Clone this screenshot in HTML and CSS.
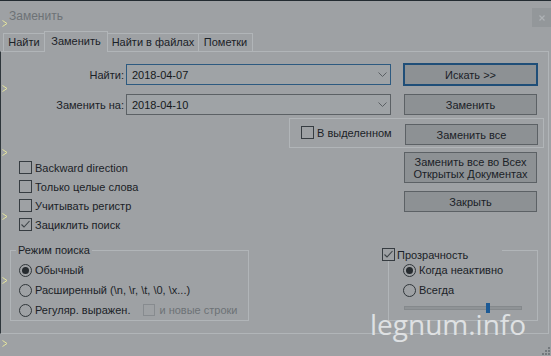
FILE: index.html
```html
<!DOCTYPE html>
<html lang="ru">
<head>
<meta charset="utf-8">
<title>Заменить</title>
<link rel="stylesheet" href="styles.css">
</head>
<body>
<div class="titlebar">
  <span class="title">Заменить</span>
  <span class="close"><svg width="6" height="6" viewBox="0 0 6 6"><path d="M0.5 0.5L5.5 5.5M5.5 0.5L0.5 5.5" stroke="#aeb2b5" stroke-width="1.2"/></svg></span>
</div>
<div class="tabs">
  <div class="tab t1">Найти</div>
  <div class="tab active t2">Заменить</div>
  <div class="tab t3">Найти в файлах</div>
  <div class="tab t4">Пометки</div>
</div>
<div class="panel">
  <div class="row r1">
    <label class="lbl">Найти:</label>
    <div class="combo focus"><span>2018-04-07</span><svg class="chev" width="9" height="5" viewBox="0 0 9 5"><path d="M0.5 0.5L4.5 4.5L8.5 0.5" fill="none" stroke="#5a5f63" stroke-width="1"/></svg></div>
    <button class="btn default">Искать &gt;&gt;</button>
  </div>
  <div class="row r2">
    <label class="lbl">Заменить на:</label>
    <div class="combo"><span>2018-04-10</span><svg class="chev" width="9" height="5" viewBox="0 0 9 5"><path d="M0.5 0.5L4.5 4.5L8.5 0.5" fill="none" stroke="#5a5f63" stroke-width="1"/></svg></div>
    <button class="btn">Заменить</button>
  </div>
  <div class="selbox">
    <span class="check sel"><i class="box"></i>В выделенном</span>
    <button class="btn">Заменить все</button>
  </div>
  <div class="middle">
    <div class="opts">
      <div class="check opt"><i class="box"></i>Backward direction</div>
      <div class="check opt"><i class="box"></i>Только целые слова</div>
      <div class="check opt"><i class="box"></i>Учитывать регистр</div>
      <div class="check opt"><i class="box on"><svg width="11" height="11" viewBox="0 0 11 11"><path d="M1.5 5.5L4 8L9.5 2" fill="none" stroke="#3d4347" stroke-width="1.1"/></svg></i>Зациклить поиск</div>
    </div>
    <div class="actions">
      <button class="btn tall">Заменить все во Всех<br>Открытых Документах</button>
      <button class="btn close-btn">Закрыть</button>
    </div>
  </div>
  <div class="bottom">
    <div class="group mode">
      <div class="legend">Режим поиска</div>
      <div class="radios">
        <div class="radio"><i class="dot on"></i>Обычный</div>
        <div class="radio"><i class="dot"></i>Расширенный (\n, \r, \t, \0, \x...)</div>
        <div class="radio"><i class="dot"></i>Регуляр. выражен.<span class="check disabled"><i class="box"></i>и новые строки</span></div>
      </div>
    </div>
    <div class="group trans">
      <div class="thead"><i class="box on"><svg width="11" height="11" viewBox="0 0 11 11"><path d="M1.5 5.5L4 8L9.5 2" fill="none" stroke="#3d4347" stroke-width="1.1"/></svg></i>Прозрачность</div>
      <div class="radios tr">
        <div class="radio"><i class="dot on"></i>Когда неактивно</div>
        <div class="radio"><i class="dot"></i>Всегда</div>
      </div>
      <div class="slider"><div class="track"></div><div class="thumb"></div></div>
    </div>
  </div>
</div>
<div class="status">
  <svg class="grip" width="9" height="9" viewBox="0 0 9 9" fill="#74797d">
    <rect x="7" y="1" width="2" height="2"/>
    <rect x="4" y="4" width="2" height="2"/><rect x="7" y="4" width="2" height="2"/>
    <rect x="1" y="7" width="2" height="2"/><rect x="4" y="7" width="2" height="2"/><rect x="7" y="7" width="2" height="2"/>
  </svg>
</div>

<svg class="marker m1" width="6" height="7" viewBox="0 0 6 7"><path d="M0.5 0.5L5 3.5L0.5 6.5" fill="none" stroke="#e4e49c" stroke-width="1"/></svg>
<svg class="marker m2" width="6" height="7" viewBox="0 0 6 7"><path d="M0.5 0.5L5 3.5L0.5 6.5" fill="none" stroke="#e4e49c" stroke-width="1"/></svg>
<svg class="marker m3" width="6" height="7" viewBox="0 0 6 7"><path d="M0.5 0.5L5 3.5L0.5 6.5" fill="none" stroke="#e4e49c" stroke-width="1"/></svg>
<svg class="marker m4" width="6" height="7" viewBox="0 0 6 7"><path d="M0.5 0.5L5 3.5L0.5 6.5" fill="none" stroke="#e4e49c" stroke-width="1"/></svg>
<svg class="marker m5" width="6" height="7" viewBox="0 0 6 7"><path d="M0.5 0.5L5 3.5L0.5 6.5" fill="none" stroke="#e4e49c" stroke-width="1"/></svg>
<svg class="marker m6" width="6" height="7" viewBox="0 0 6 7"><path d="M0.5 0.5L5 3.5L0.5 6.5" fill="none" stroke="#e4e49c" stroke-width="1"/></svg>

<div class="watermark">legnum.info</div>
</body>
</html>
```

FILE: styles.css
```css
* { box-sizing: border-box; }

html, body { margin: 0; padding: 0; }

body {
  width: 551px;
  height: 356px;
  overflow: hidden;
  position: relative;
  background: #9ea1a4;
  font-family: "Liberation Sans", Arial, sans-serif;
  font-size: 11px;
  color: #1b2127;
}

/* title bar */
.titlebar {
  height: 31px;
  display: flex;
  align-items: flex-start;
  border-top: 1px solid #232b31;
}
.title {
  font-size: 12px;
  line-height: 15px;
  color: #6d7276;
  margin: 8px 0 0 9px;
}
.close {
  margin-left: auto;
  margin-top: 7px;
  width: 19px;
  height: 19px;
  background: #93979a;
  display: flex;
  align-items: center;
  justify-content: center;
}

/* tabs */
.tabs {
  display: flex;
  align-items: flex-end;
  height: 20px;
  padding-left: 3px;
}
.tab {
  height: 18px;
  line-height: 17px;
  text-align: center;
  border: 1px solid #b1b5b8;
  border-bottom: none;
  margin-left: -1px;
  color: #1b2127;
}
.t1 { width: 42px; margin-left: 0; }
.t2 { width: 64px; }
.t3 { width: 92px; }
.t4 { width: 55px; }
.tab.active {
  height: 21px;
  line-height: 19px;
  margin-bottom: -1px;
  background: #9ea1a4;
  position: relative;
  z-index: 1;
}

/* panel */
.panel {
  width: 549px;
  height: 283px;
  border: 1px solid #b1b5b8;
  border-left-color: #2e363b;
}

.row {
  display: flex;
  align-items: center;
  height: 21px;
}
.r1 { margin-top: 12px; }
.r2 { margin-top: 9px; }

.lbl {
  width: 123px;
  text-align: right;
  margin-right: 2px;
}
.combo {
  width: 265px;
  height: 21px;
  border: 1px solid #5c6165;
  display: flex;
  align-items: center;
  padding-left: 5px;
  color: #15191c;
  background: #9fa3a6;
}
.combo.focus { border-color: #2d5a80; }
.chev { margin-left: auto; margin-right: 3px; }

.btn {
  width: 133px;
  height: 21px;
  margin: 0;
  padding: 0;
  font-family: inherit;
  font-size: 11px;
  color: #1b2127;
  background: #8d9194;
  border: 1px solid #5c6165;
  text-align: center;
}
.row .btn { margin-left: 13px; }
.btn.default {
  border-color: #1f4e78;
  outline: 1px solid #1f4e78;
}

/* selection box */
.selbox {
  margin: 3px 0 0 288px;
  width: 255px;
  height: 30px;
  border: 1px solid #b1b5b8;
  display: flex;
  align-items: flex-start;
  padding: 5px 5px 0 11px;
}
.selbox .btn { margin-left: auto; }
.check {
  display: flex;
  align-items: center;
  gap: 3px;
}
.check.sel { margin-top: 2px; height: 13px; }

.box {
  display: inline-flex;
  align-items: center;
  justify-content: center;
  width: 13px;
  height: 13px;
  border: 1px solid #363c41;
  flex: none;
}

/* middle */
.middle {
  display: flex;
  align-items: flex-start;
  height: 87px;
}
.opts {
  padding-left: 18px;
  margin-top: 10px;
}
.opt { height: 19px; }
.actions {
  margin-left: auto;
  margin-right: 11px;
  margin-top: 4px;
  display: flex;
  flex-direction: column;
  gap: 8px;
}
.btn.tall {
  height: 31px;
  line-height: 12px;
}

/* bottom groups */
.bottom {
  display: flex;
  align-items: flex-start;
  margin-top: 15px;
}
.group {
  border: 1px solid #b1b5b8;
}
.mode {
  margin-left: 9px;
  width: 239px;
  padding-bottom: 1px;
}
.legend {
  width: fit-content;
  margin: -7px 0 0 5px;
  padding: 0 2px;
  height: 13px;
  line-height: 13px;
  background: #9ea1a4;
}
.radios {
  display: flex;
  flex-direction: column;
  gap: 2px;
  padding-left: 8px;
  margin-top: 4px;
}
.radio {
  display: flex;
  align-items: center;
  height: 18px;
  gap: 3px;
}
.dot {
  width: 13px;
  height: 13px;
  border-radius: 50%;
  border: 1px solid #30363a;
  flex: none;
  display: flex;
  align-items: center;
  justify-content: center;
}
.dot.on::after {
  content: "";
  width: 7px;
  height: 7px;
  border-radius: 50%;
  background: #262b2f;
}
.check.disabled {
  margin-left: 10px;
  color: #6d7276;
  gap: 4px;
}
.check.disabled .box {
  width: 12px;
  height: 12px;
  border-color: #878b8f;
}

.trans {
  margin-left: 139px;
  width: 150px;
  padding-bottom: 6px;
}
.thead {
  display: flex;
  align-items: center;
  gap: 2px;
  width: 120px;
  height: 13px;
  margin: -3px 0 0 -7px;
  background: #9ea1a4;
}
.radios.tr {
  margin-top: 0;
  padding-left: 14px;
}
.slider {
  position: relative;
  height: 12px;
  margin: 3px 0 0 15px;
  width: 118px;
  display: flex;
  align-items: center;
}
.track {
  width: 118px;
  height: 4px;
  background: #8f9396;
  border: 1px solid #85898c;
}
.thumb {
  position: absolute;
  left: 82px;
  top: 1px;
  width: 4px;
  height: 10px;
  background: #1d5a95;
}

/* status bar */
.status {
  height: 22px;
  display: flex;
  align-items: flex-end;
  justify-content: flex-end;
  padding: 0 1px 1px 0;
}

/* background editor markers showing through */
.marker {
  position: absolute;
  left: 2px;
}
.m1 { top: 20px; }
.m2 { top: 85px; }
.m3 { top: 149px; }
.m4 { top: 213px; }
.m5 { top: 277px; }
.m6 { top: 340px; }

.watermark {
  position: absolute;
  left: 370px;
  top: 310px;
  font-family: "Open Sans", sans-serif;
  font-size: 28px;
  line-height: 28px;
  color: #dfe1e3;
}
```
